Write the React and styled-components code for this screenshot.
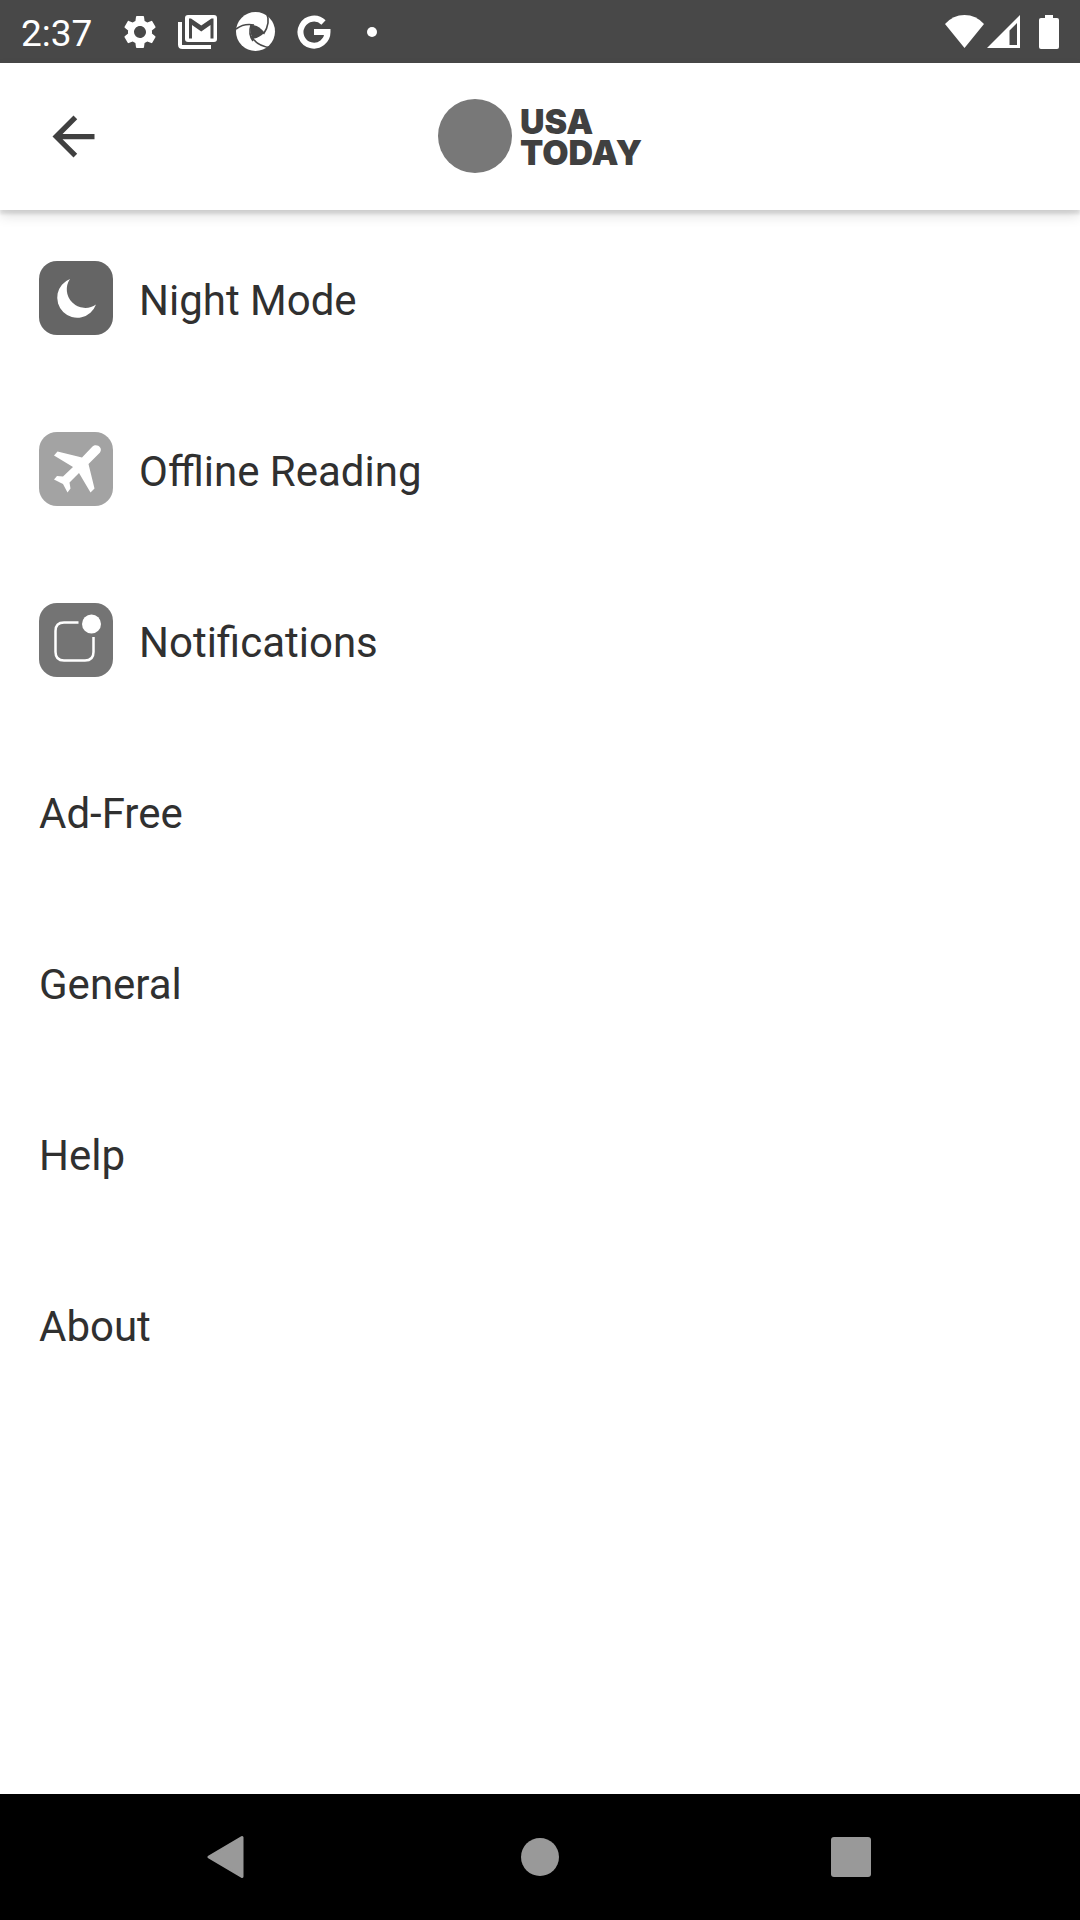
import React from "react";
import styled, { createGlobalStyle } from "styled-components";

const GlobalStyle = createGlobalStyle`
  *, *::before, *::after { box-sizing: border-box; }
  body { margin: 0; background: #fff; font-family: Roboto, "Liberation Sans", sans-serif; }
  svg { display: block; flex: none; }
`;

const Screen = styled.div`
  display: flex;
  flex-direction: column;
  min-height: 100vh;
  background: #fff;
`;

const StatusBar = styled.div`
  display: flex;
  align-items: center;
  justify-content: space-between;
  height: 63px;
  padding: 0 21px;
  background: #484848;
  color: #fff;
`;

const StatusGroup = styled.div`
  display: flex;
  align-items: center;
  gap: ${(p) => p.$gap}px;
`;

const StatusSlot = styled.span`
  display: flex;
  justify-content: center;
  width: 58px;
`;

const Clock = styled.time`
  padding-top: 4px;
  font-size: 37px;
  line-height: 42px;
`;

const Header = styled.header`
  display: grid;
  grid-template-columns: 1fr auto 1fr;
  align-items: center;
  height: 147px;
  padding: 0 42px 1px;
  background: #fff;
  box-shadow: 0 4px 3px rgba(0, 0, 0, 0.1), 0 6px 12px rgba(0, 0, 0, 0.12);
`;

const IconButton = styled.button`
  display: flex;
  align-items: center;
  justify-content: center;
  justify-self: start;
  padding: 0;
  border: 0;
  background: none;
  color: ${(p) => p.$color};
  cursor: pointer;
`;

const Brand = styled.a`
  display: flex;
  align-items: center;
  gap: 8px;
  color: #404040;
  text-decoration: none;
`;

const BrandDot = styled.span`
  width: 74px;
  height: 74px;
  border-radius: 50%;
  background: #787878;
`;

const BrandName = styled.span`
  padding-top: 2px;
  font-family: Inter, "Liberation Sans", sans-serif;
  font-size: 34px;
  font-weight: 900;
  line-height: 31px;
  white-space: pre-line;
`;

const Menu = styled.nav`
  flex: 1;
  padding-top: 2px;
`;

const MenuList = styled.ul`
  margin: 0;
  padding: 0;
  list-style: none;
`;

const MenuLink = styled.a`
  display: flex;
  align-items: center;
  gap: 26px;
  height: 171px;
  padding: 0 39px;
  color: #303030;
  text-decoration: none;
`;

const Tile = styled.span`
  display: flex;
  width: 74px;
  height: 74px;
  border-radius: 18px;
  background: ${(p) => p.$color};
`;

const MenuLabel = styled.span`
  padding-top: 6px;
  font-size: 42px;
  line-height: 50px;
`;

const NavBar = styled.footer`
  display: flex;
  justify-content: center;
  height: 126px;
  background: #000;
`;

const NavButton = styled(IconButton)`
  width: 311px;
`;

const GearIcon = () => (
  <svg width="40" height="40" viewBox="0 0 24 24" fill="currentColor">
    <path d="M19.14 12.94c.04-.3.06-.61.06-.94 0-.32-.02-.64-.07-.94l2.03-1.58a.49.49 0 0 0 .12-.61l-1.92-3.32a.488.488 0 0 0-.59-.22l-2.39.96c-.5-.38-1.03-.7-1.62-.94l-.36-2.54a.484.484 0 0 0-.48-.41h-3.84c-.24 0-.43.17-.47.41l-.36 2.54c-.59.24-1.13.57-1.62.94l-2.39-.96c-.22-.08-.47 0-.59.22L2.74 8.87c-.12.21-.08.47.12.61l2.03 1.58c-.05.3-.09.63-.09.94s.02.64.07.94l-2.03 1.58a.49.49 0 0 0-.12.61l1.92 3.32c.12.22.37.29.59.22l2.39-.96c.5.38 1.03.7 1.62.94l.36 2.54c.05.24.24.41.48.41h3.84c.24 0 .44-.17.47-.41l.36-2.54c.59-.24 1.13-.56 1.62-.94l2.39.96c.22.08.47 0 .59-.22l1.92-3.32c.12-.22.07-.47-.12-.61l-2.01-1.58zM12 15.6A3.61 3.61 0 0 1 8.4 12c0-1.98 1.62-3.6 3.6-3.6s3.6 1.62 3.6 3.6-1.62 3.6-3.6 3.6z" />
  </svg>
);

const MailStackIcon = () => (
  <svg width="40" height="34" viewBox="0 0 40 34" fill="none">
    <path d="M2 7V29.5Q2 32 4.5 32H33" stroke="currentColor" strokeWidth="4" />
    <rect x="7" width="32" height="27" rx="3" fill="currentColor" />
    <path d="M11 3.5H13L23.25 10.5 33.5 3.5H35.5V23.5H32.5V10L23.25 16.5 14 10V23.5H11Z" fill="#484848" />
  </svg>
);

const ApertureIcon = () => (
  <svg width="40" height="39" viewBox="0 0 40 39">
    <circle cx="19.5" cy="19.5" r="19.5" fill="currentColor" />
    <path d="M15 13Q22 12.5 28.5 20.5Q24 25.5 16.5 27Q13.5 20 15 13Z" fill="#484848" />
    <g fill="none" stroke="#484848" strokeWidth="1.6">
      <path d="M0 17Q8 11 18 13" />
      <path d="M30.5 1Q35 11 27.5 22" />
      <path d="M15.5 24Q20 34 36 36" />
      <path d="M15 13Q12 22 17 29" />
    </g>
  </svg>
);

const GoogleIcon = () => (
  <svg width="34" height="34" viewBox="0 0 34 34">
    <path d="M26.5 7.5A13.5 13.5 0 1 0 30.5 17H17" fill="none" stroke="currentColor" strokeWidth="6" />
  </svg>
);

const DotIcon = () => (
  <svg width="10" height="10" viewBox="0 0 10 10">
    <circle cx="5" cy="5" r="5" fill="currentColor" />
  </svg>
);

const WifiIcon = () => (
  <svg width="39" height="34" viewBox="0 0 39 34">
    <path d="M19.5 33L0 9Q8 0 19.5 0T39 9Z" fill="currentColor" />
  </svg>
);

const SignalIcon = () => (
  <svg width="33" height="34" viewBox="0 0 33 34">
    <path fillRule="evenodd" d="M0 33L33 0V33ZM22.5 30H30V8L22.5 15.5Z" fill="currentColor" />
  </svg>
);

const BatteryIcon = () => (
  <svg width="20" height="34" viewBox="0 0 20 34" fill="currentColor">
    <rect x="6" width="8" height="6" />
    <rect y="3" width="20" height="31" rx="2" />
  </svg>
);

const BackArrowIcon = () => (
  <svg width="63" height="63" viewBox="0 0 24 24" fill="currentColor">
    <path d="M20 11H7.83l5.59-5.59L12 4l-8 8 8 8 1.41-1.41L7.83 13H20v-2z" />
  </svg>
);

const MoonIcon = () => (
  <svg width="74" height="74" viewBox="0 0 74 74">
    <path d="M31 18A20 20 0 1 0 57 43.5A18.5 18.5 0 0 1 31 18Z" fill="#fff" />
  </svg>
);

const PlaneIcon = () => (
  <svg width="74" height="74" viewBox="0 0 74 74">
    <path d="M43 25.5L53.5 14.5C57 11 64.5 15 61 20.5L49.5 32L55.5 56.5L51.5 60.5L40 41L30.5 50.5L31.5 56.5L28.5 60.5L24 52L15 47.5L18 44L24 44.5L34 35L15 23.5L18.5 19.5Z" fill="#fff" />
  </svg>
);

const BadgeIcon = () => (
  <svg width="74" height="74" viewBox="0 0 74 74" fill="none">
    <path d="M39.5 19.5H25Q16.5 19.5 16.5 28V49Q16.5 57.5 25 57.5H46Q54.5 57.5 54.5 49V34" stroke="#fff" strokeWidth="2.5" />
    <circle cx="52.5" cy="21" r="9.5" fill="#fff" />
  </svg>
);

const statusIcons = [GearIcon, MailStackIcon, ApertureIcon, GoogleIcon, DotIcon];

const items = [
  { label: "Night Mode", color: "#656565", Icon: MoonIcon },
  { label: "Offline Reading", color: "#a3a3a3", Icon: PlaneIcon },
  { label: "Notifications", color: "#747474", Icon: BadgeIcon },
  { label: "Ad-Free" },
  { label: "General" },
  { label: "Help" },
  { label: "About" },
];

export default function App() {
  return (
    <Screen>
      <GlobalStyle />
      <StatusBar>
        <StatusGroup $gap={19}>
          <Clock>2:37</Clock>
          <StatusGroup $gap={0}>
            {statusIcons.map((Icon, i) => (
              <StatusSlot key={i}>
                <Icon />
              </StatusSlot>
            ))}
          </StatusGroup>
        </StatusGroup>
        <StatusGroup $gap={19}>
          <StatusGroup $gap={3}>
            <WifiIcon />
            <SignalIcon />
          </StatusGroup>
          <BatteryIcon />
        </StatusGroup>
      </StatusBar>
      <Header>
        <IconButton $color="#404040" aria-label="Back">
          <BackArrowIcon />
        </IconButton>
        <Brand href="#home">
          <BrandDot />
          <BrandName>{"USA\nTODAY"}</BrandName>
        </Brand>
      </Header>
      <Menu>
        <MenuList>
          {items.map(({ label, color, Icon }) => (
            <li key={label}>
              <MenuLink href="#settings">
                {Icon && (
                  <Tile $color={color}>
                    <Icon />
                  </Tile>
                )}
                <MenuLabel>{label}</MenuLabel>
              </MenuLink>
            </li>
          ))}
        </MenuList>
      </Menu>
      <NavBar>
        <NavButton $color="#999" aria-label="Back">
          <svg width="44" height="44" viewBox="0 0 44 44">
            <path d="M2 22L35 2.5V41.5Z" fill="currentColor" stroke="currentColor" strokeWidth="3" strokeLinejoin="round" />
          </svg>
        </NavButton>
        <NavButton $color="#999" aria-label="Home">
          <svg width="38" height="38" viewBox="0 0 38 38">
            <circle cx="19" cy="19" r="19" fill="currentColor" />
          </svg>
        </NavButton>
        <NavButton $color="#999" aria-label="Overview">
          <svg width="40" height="40" viewBox="0 0 40 40">
            <rect width="40" height="40" rx="3" fill="currentColor" />
          </svg>
        </NavButton>
      </NavBar>
    </Screen>
  );
}
